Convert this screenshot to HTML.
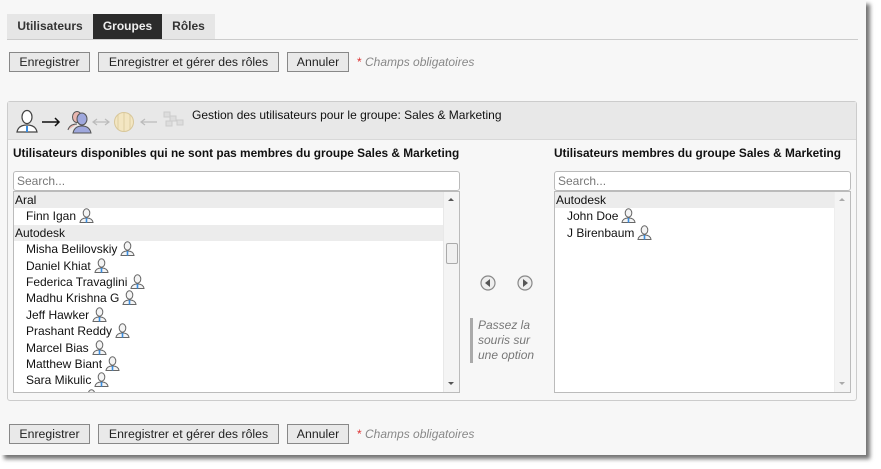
<!DOCTYPE html>
<html><head><meta charset="utf-8"><style>
*{box-sizing:border-box}
body{margin:0;width:881px;height:469px;background:#fff;font-family:"Liberation Sans",sans-serif;font-size:12px;color:#111;position:relative;overflow:hidden}
.frame{position:absolute;left:0;top:0;width:866px;height:455px;background:#f7f7f7;box-shadow:4px 4px 4px rgba(0,0,0,.55)}
.tab{position:absolute;top:14px;height:25px;line-height:25px;font-weight:bold;font-size:12px;text-align:center;background:#e6e6e6;color:#333}
.line{position:absolute;left:7px;top:39px;width:851px;height:1px;background:#ccc}
.btn{position:absolute;height:20px;line-height:18px;border:1px solid #888;background:#e9e9e9;font-size:12.3px;text-align:center;color:#222}
.req{position:absolute;font-style:italic;color:#888;font-size:12px}
.req b{color:#d33;font-weight:normal;font-style:normal}
.panel{position:absolute;left:7px;top:101px;width:850px;height:300px;border:1px solid #ccc;border-radius:3px;background:#f7f7f7}
.hdr{position:absolute;left:0;top:0;width:848px;height:38px;background:#e8e8e8;border-bottom:1px solid #d8d8d8}
.ttl{position:absolute;font-weight:bold;font-size:11.85px;top:146px}
.box{position:absolute;border:1px solid #bbb;background:#fff}
.search{position:absolute;height:20px;border:1px solid #bbb;border-radius:3px;background:#fff;color:#777;padding-left:3px;line-height:18px}
.row{height:16.4px;line-height:16.4px;white-space:nowrap}
.grp{background:#ececec;padding-left:1px}
.usr{padding-left:12px}
.sb{position:absolute;right:0;top:0;width:16px;height:100%;background:#f4f4f4;border-left:1px solid #e8e8e8}
svg.u{vertical-align:-3px;margin-left:3px}
</style></head><body>
<div class="frame"></div>
<div class="tab" style="left:7px;width:86px">Utilisateurs</div>
<div class="tab" style="left:93px;width:69px;background:#2b2b2b;color:#eee">Groupes</div>
<div class="tab" style="left:162px;width:53px">Rôles</div>
<div class="line"></div>

<div class="btn" style="left:9px;top:52px;width:81px">Enregistrer</div>
<div class="btn" style="left:98px;top:52px;width:181px">Enregistrer et gérer des rôles</div>
<div class="btn" style="left:287px;top:52px;width:62px">Annuler</div>
<div class="req" style="left:357px;top:55px"><b>*</b> Champs obligatoires</div>

<div class="panel"><div class="hdr"></div></div>
<svg style="position:absolute;left:14px;top:106px" width="175" height="30" viewBox="0 0 175 30">
 <g fill="none" stroke="#444" stroke-width="1.2"><ellipse cx="13" cy="11" rx="5" ry="6.5" fill="#fff"/><path d="M3 26c1-5 5-7 10-7s9 2 10 7z" fill="#fff"/></g>
 <path d="M13 20v6" stroke="#3a8de0" stroke-width="2"/>
 <path d="M28 16h17M41 12l4 4-4 4" stroke="#111" stroke-width="1.5" fill="none"/>
 <g stroke="#555" stroke-width="1"><ellipse cx="63" cy="11" rx="4.5" ry="5.5" fill="#e9b7b0"/><path d="M54 24c1-4 4-6 9-6" fill="#e9b7b0"/><ellipse cx="68" cy="13" rx="5" ry="6" fill="#9fa8dd"/><path d="M59 27c1-5 4-7 9-7s8 2 9 7z" fill="#9fa8dd"/></g>
 <path d="M79 16h16M83 13l-4 3 4 3M91 13l4 3-4 3" stroke="#bbb" stroke-width="1.2" fill="none"/>
 <circle cx="110" cy="16" r="9.5" fill="#f3e6c2" stroke="#d8c79a"/><path d="M110 7v18M104 9v15M116 9v15" stroke="#d8c79a" stroke-width="0.8"/>
 <path d="M127 16h16M131 13l-4 3 4 3" stroke="#bbb" stroke-width="1.2" fill="none"/>
 <g fill="#ddd" stroke="#ccc"><rect x="150" y="6" width="6" height="5"/><rect x="156" y="10" width="6" height="5"/><rect x="163" y="14" width="6" height="5"/><rect x="152" y="15" width="6" height="5"/></g>
</svg>
<div style="position:absolute;left:192px;top:108px">Gestion des utilisateurs pour le groupe: Sales &amp; Marketing</div>

<div class="ttl" style="left:13px">Utilisateurs disponibles qui ne sont pas membres du groupe Sales &amp; Marketing</div>
<div class="ttl" style="left:554px">Utilisateurs membres du groupe Sales &amp; Marketing</div>

<div class="search" style="left:13px;top:171px;width:447px">Search...</div>
<div class="box" style="left:13px;top:191px;width:447px;height:202px;overflow:hidden">
 <div class="sb"><div style="position:absolute;left:2px;top:51px;width:12px;height:21px;border:1px solid #aaa;border-radius:2px;background:#f0f0f0"></div>
 <div style="position:absolute;left:4px;top:6px;border:3px solid transparent;border-bottom:3px solid #555;border-top:0"></div>
 <div style="position:absolute;left:4px;bottom:7px;border:3px solid transparent;border-top:3px solid #555;border-bottom:0"></div></div>
 <div id="L" style="margin-right:16px"></div>
</div>

<div class="search" style="left:554px;top:171px;width:297px">Search...</div>
<div class="box" style="left:554px;top:191px;width:297px;height:202px">
 <div class="sb" style="border-left:1px solid #eee"><div style="position:absolute;left:4px;top:6px;border:3px solid transparent;border-bottom:3px solid #aaa;border-top:0"></div>
 <div style="position:absolute;left:4px;bottom:7px;border:3px solid transparent;border-top:3px solid #aaa;border-bottom:0"></div></div>
 <div id="R" style="margin-right:16px"></div>
</div>

<svg style="position:absolute;left:479px;top:274px" width="56" height="18">
 <circle cx="9" cy="9" r="7" fill="#eee" stroke="#888" stroke-width="1.2"/><path d="M11 5v8l-5-4z" fill="#555"/>
 <circle cx="46" cy="9" r="7" fill="#eee" stroke="#888" stroke-width="1.2"/><path d="M44 5v8l5-4z" fill="#555"/>
</svg>
<div style="position:absolute;left:470px;top:318px;width:3px;height:45px;background:#aaa"></div>
<div style="position:absolute;left:478px;top:318px;font-style:italic;color:#777;line-height:15px">Passez la<br>souris sur<br>une option</div>

<div class="btn" style="left:9px;top:424px;width:81px">Enregistrer</div>
<div class="btn" style="left:98px;top:424px;width:181px">Enregistrer et gérer des rôles</div>
<div class="btn" style="left:287px;top:424px;width:62px">Annuler</div>
<div class="req" style="left:357px;top:427px"><b>*</b> Champs obligatoires</div>

<script>
var ic='<svg class="u" width="15" height="15" viewBox="0 0 15 15"><ellipse cx="7.5" cy="5" rx="3.3" ry="4.2" fill="#f4f4f4" stroke="#666"/><path d="M1 14.5c.5-3 3-4.5 6.5-4.5s6 1.5 6.5 4.5z" fill="#f4f4f4" stroke="#666"/><path d="M7.5 10v4.5" stroke="#3a8de0" stroke-width="1.6"/></svg>';
function b(id,rows){var h='';rows.forEach(function(r){h+=r[0]=='g'?'<div class="row grp">'+r.slice(1)+'</div>':'<div class="row usr">'+r+ic+'</div>'});document.getElementById(id).innerHTML=h}
b('L',['gAral','Finn Igan','gAutodesk','Misha Belilovskiy','Daniel Khiat','Federica Travaglini','Madhu Krishna G','Jeff Hawker','Prashant Reddy','Marcel Bias','Matthew Biant','Sara Mikulic','Tom Berry']);
b('R',['gAutodesk','John Doe','J Birenbaum']);
</script>
</body></html>
